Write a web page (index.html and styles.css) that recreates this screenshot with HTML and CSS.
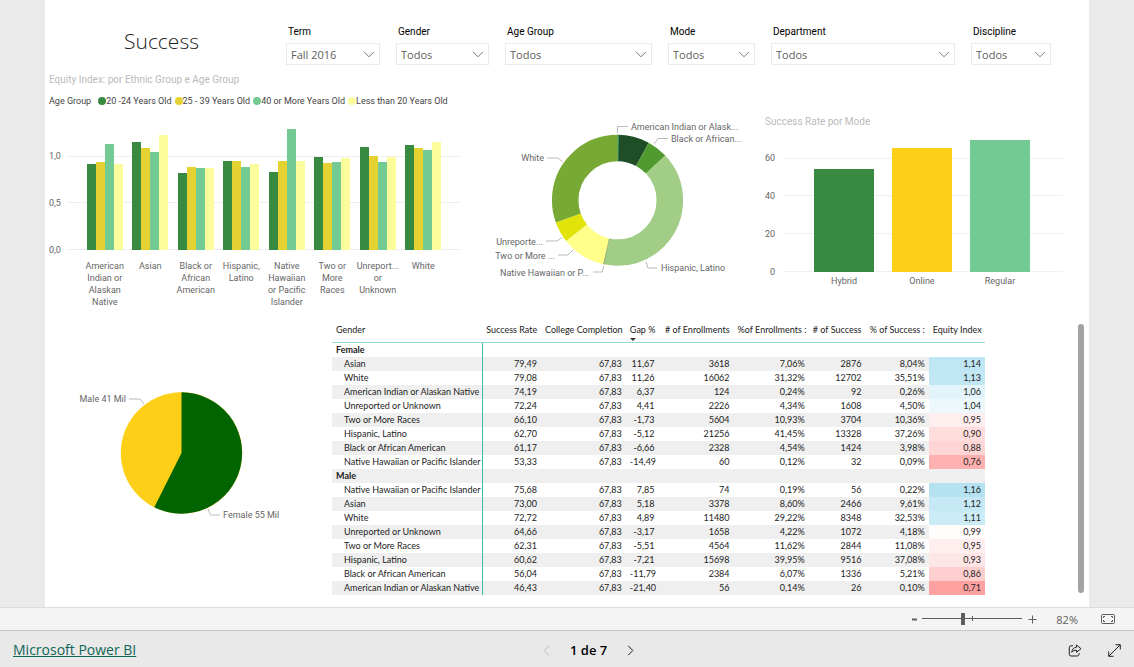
FILE: index.html
```html
<!DOCTYPE html>
<html lang="pt">
<head>
<meta charset="utf-8">
<meta name="viewport" content="width=device-width, initial-scale=1">
<title>Success - Microsoft Power BI</title>
<link rel="stylesheet" href="styles.css">
</head>
<body>
<main class="stage">
<div class="report">
  <header class="top">
    <h1 class="title">Success</h1>
    <div class="filter"><label for="term">Term</label><div class="pick"><select id="term"><option>Fall 2016</option></select><svg class="arrow" viewBox="0 0 12 7"><path d="M1 .8 6 5.8 11 .8"/></svg></div></div>
    <div class="filter"><label for="gender">Gender</label><div class="pick"><select id="gender"><option>Todos</option></select><svg class="arrow" viewBox="0 0 12 7"><path d="M1 .8 6 5.8 11 .8"/></svg></div></div>
    <div class="filter"><label for="age">Age Group</label><div class="pick"><select id="age"><option>Todos</option></select><svg class="arrow" viewBox="0 0 12 7"><path d="M1 .8 6 5.8 11 .8"/></svg></div></div>
    <div class="filter"><label for="mode">Mode</label><div class="pick"><select id="mode"><option>Todos</option></select><svg class="arrow" viewBox="0 0 12 7"><path d="M1 .8 6 5.8 11 .8"/></svg></div></div>
    <div class="filter"><label for="dept">Department</label><div class="pick"><select id="dept"><option>Todos</option></select><svg class="arrow" viewBox="0 0 12 7"><path d="M1 .8 6 5.8 11 .8"/></svg></div></div>
    <div class="filter"><label for="disc">Discipline</label><div class="pick"><select id="disc"><option>Todos</option></select><svg class="arrow" viewBox="0 0 12 7"><path d="M1 .8 6 5.8 11 .8"/></svg></div></div>
  </header>

  <div class="charts">
    <section class="equity">
      <h2 class="caption">Equity Index: por Ethnic Group e Age Group</h2>
      <div class="legend">
        <span class="legend-name">Age Group</span>
        <span class="key k1">20 -24 Years Old</span>
        <span class="key k2">25 - 39 Years Old</span>
        <span class="key k3">40 or More Years Old</span>
        <span class="key k4">Less than 20 Years Old</span>
      </div>
      <div class="chart">
        <div class="axis axis-equity"><span>1,0</span><span>0,5</span><span>0,0</span></div>
        <div class="plot plot-equity">
          <div class="group"><i class="k1" style="height:68%"></i><i class="k2" style="height:70%"></i><i class="k3" style="height:84%"></i><i class="k4" style="height:68%"></i></div>
          <div class="group"><i class="k1" style="height:86%"></i><i class="k2" style="height:81%"></i><i class="k3" style="height:78%"></i><i class="k4" style="height:91%"></i></div>
          <div class="group"><i class="k1" style="height:61%"></i><i class="k2" style="height:66%"></i><i class="k3" style="height:65%"></i><i class="k4" style="height:65%"></i></div>
          <div class="group"><i class="k1" style="height:71%"></i><i class="k2" style="height:71%"></i><i class="k3" style="height:66%"></i><i class="k4" style="height:68%"></i></div>
          <div class="group"><i class="k1" style="height:62%"></i><i class="k2" style="height:71%"></i><i class="k3" style="height:96%"></i><i class="k4" style="height:71%"></i></div>
          <div class="group"><i class="k1" style="height:74%"></i><i class="k2" style="height:69%"></i><i class="k3" style="height:70%"></i><i class="k4" style="height:73%"></i></div>
          <div class="group"><i class="k1" style="height:82%"></i><i class="k2" style="height:75%"></i><i class="k3" style="height:70%"></i><i class="k4" style="height:74%"></i></div>
          <div class="group"><i class="k1" style="height:83%"></i><i class="k2" style="height:81%"></i><i class="k3" style="height:79%"></i><i class="k4" style="height:86%"></i></div>
        </div>
        <div class="cats cats-equity">
          <span>American<br>Indian or<br>Alaskan<br>Native</span><span>Asian</span><span>Black or<br>African<br>American</span><span>Hispanic,<br>Latino</span><span>Native<br>Hawaiian<br>or Pacific<br>Islander</span><span>Two or<br>More<br>Races</span><span>Unreport...<br>or<br>Unknown</span><span>White</span>
        </div>
      </div>
    </section>

    <svg class="donut" viewBox="0 0 270 180" role="img" aria-label="Ethnic Group">
      <g class="ring" transform="rotate(-90 127.5 90.3)">
        <circle cx="127.5" cy="90.3" r="52.3" pathLength="1000" stroke="#1f4e26" stroke-dasharray="79 921"/>
        <circle cx="127.5" cy="90.3" r="52.3" pathLength="1000" stroke="#3a9a6a" stroke-dasharray="4 996"/>
        <circle cx="127.5" cy="90.3" r="52.3" pathLength="1000" stroke="#519a30" stroke-dasharray="51 949" stroke-dashoffset="-79"/>
        <circle cx="127.5" cy="90.3" r="52.3" pathLength="1000" stroke="#a2cd86" stroke-dasharray="404 596" stroke-dashoffset="-130"/>
        <circle cx="127.5" cy="90.3" r="52.3" pathLength="1000" stroke="#ffff8a" stroke-dasharray="109 891" stroke-dashoffset="-534"/>
        <circle cx="127.5" cy="90.3" r="52.3" pathLength="1000" stroke="#8a9a6a" stroke-dasharray="2 998" stroke-dashoffset="-533"/>
        <circle cx="127.5" cy="90.3" r="52.3" pathLength="1000" stroke="#e1e30b" stroke-dasharray="52 948" stroke-dashoffset="-643"/>
        <circle cx="127.5" cy="90.3" r="52.3" pathLength="1000" stroke="#78a935" stroke-dasharray="305 695" stroke-dashoffset="-695"/>
      </g>
      <path class="lead" d="M127.5 23V16.5H138M164 34l4-5.500h10M57 48h11l5 4M56 131h11l5-3.500M68 145h10l5-5M103 162h9l2-6M156 152l2 6h9"/>
      <g class="tag">
        <text x="141" y="20">American Indian or Alask...</text>
        <text x="181" y="32">Black or African...</text>
        <text x="54" y="51" text-anchor="end">White</text>
        <text x="53" y="135" text-anchor="end">Unreporte...</text>
        <text x="65" y="149" text-anchor="end">Two or More ...</text>
        <text x="99" y="166" text-anchor="end">Native Hawaiian or P...</text>
        <text x="171" y="161">Hispanic, Latino</text>
      </g>
    </svg>

    <section class="rate">
      <h2 class="caption">Success Rate por Mode</h2>
      <div class="chart">
        <div class="axis axis-rate"><span>60</span><span>40</span><span>20</span><span>0</span></div>
        <div class="plot plot-rate"><div class="group"><i class="k1" style="height:78%"></i></div><div class="group"><i class="k5" style="height:94%"></i></div><div class="group"><i class="k3" style="height:100%"></i></div></div>
        <div class="cats cats-rate"><span>Hybrid</span><span>Online</span><span>Regular</span></div>
      </div>
    </section>
  </div>

  <div class="lower">
    <svg class="pie" viewBox="0 0 287 150" role="img" aria-label="Gender">
      <circle cx="136.500" cy="73" r="60.700" fill="#fdcf17"/>
      <path d="M136.500 73V12.300A60.700 60.700 0 1 1 109.300 127.300Z" fill="#006400"/>
      <path class="lead" d="M84 19h11l4 5M163 129l2.500 6H175"/>
      <g class="tag"><text x="81" y="22" text-anchor="end">Male 41 Mil</text><text x="178" y="138">Female 55 Mil</text></g>
    </svg>

    <table class="matrix">
      <colgroup><col class="c-name"><col class="c-rate"><col class="c-coll"><col class="c-gap"><col class="c-enr"><col class="c-penr"><col class="c-suc"><col class="c-psuc"><col class="c-idx"></colgroup>
      <thead><tr><th scope="col">Gender</th><th scope="col">Success Rate</th><th scope="col">College Completion</th><th scope="col" class="sorted">Gap %</th><th scope="col"># of Enrollments</th><th scope="col">%of Enrollments :</th><th scope="col"># of Success</th><th scope="col">% of Success :</th><th scope="col">Equity Index</th></tr></thead>
      <tbody>
        <tr class="head"><th scope="row">Female</th><td></td><td></td><td></td><td></td><td></td><td></td><td></td><td></td></tr>
        <tr><th scope="row">Asian</th><td>79,49</td><td>67,83</td><td>11,67</td><td>3618</td><td>7,06%</td><td>2876</td><td>8,04%</td><td style="background:#bfe6f3">1,14</td></tr>
        <tr><th scope="row">White</th><td>79,08</td><td>67,83</td><td>11,26</td><td>16062</td><td>31,32%</td><td>12702</td><td>35,51%</td><td style="background:#c2e7f4">1,13</td></tr>
        <tr><th scope="row">American Indian or Alaskan Native</th><td>74,19</td><td>67,83</td><td>6,37</td><td>124</td><td>0,24%</td><td>92</td><td>0,26%</td><td style="background:#e3f4fb">1,06</td></tr>
        <tr><th scope="row">Unreported or Unknown</th><td>72,24</td><td>67,83</td><td>4,41</td><td>2226</td><td>4,34%</td><td>1608</td><td>4,50%</td><td style="background:#edf8fc">1,04</td></tr>
        <tr><th scope="row">Two or More Races</th><td>66,10</td><td>67,83</td><td>-1,73</td><td>5604</td><td>10,93%</td><td>3704</td><td>10,36%</td><td style="background:#ffeeee">0,95</td></tr>
        <tr><th scope="row">Hispanic, Latino</th><td>62,70</td><td>67,83</td><td>-5,12</td><td>21256</td><td>41,45%</td><td>13328</td><td>37,26%</td><td style="background:#ffdddd">0,90</td></tr>
        <tr><th scope="row">Black or African American</th><td>61,17</td><td>67,83</td><td>-6,66</td><td>2328</td><td>4,54%</td><td>1424</td><td>3,98%</td><td style="background:#ffd5d5">0,88</td></tr>
        <tr><th scope="row">Native Hawaiian or Pacific Islander</th><td>53,33</td><td>67,83</td><td>-14,49</td><td>60</td><td>0,12%</td><td>32</td><td>0,09%</td><td style="background:#ffb0b0">0,76</td></tr>
        <tr class="head"><th scope="row">Male</th><td></td><td></td><td></td><td></td><td></td><td></td><td></td><td></td></tr>
        <tr><th scope="row">Native Hawaiian or Pacific Islander</th><td>75,68</td><td>67,83</td><td>7,85</td><td>74</td><td>0,19%</td><td>56</td><td>0,22%</td><td style="background:#b5e2f1">1,16</td></tr>
        <tr><th scope="row">Asian</th><td>73,00</td><td>67,83</td><td>5,18</td><td>3378</td><td>8,60%</td><td>2466</td><td>9,61%</td><td style="background:#c6e9f5">1,12</td></tr>
        <tr><th scope="row">White</th><td>72,72</td><td>67,83</td><td>4,89</td><td>11480</td><td>29,22%</td><td>8348</td><td>32,53%</td><td style="background:#cbebf6">1,11</td></tr>
        <tr><th scope="row">Unreported or Unknown</th><td>64,66</td><td>67,83</td><td>-3,17</td><td>1658</td><td>4,22%</td><td>1072</td><td>4,18%</td><td style="background:#fffcfc">0,99</td></tr>
        <tr><th scope="row">Two or More Races</th><td>62,31</td><td>67,83</td><td>-5,51</td><td>4564</td><td>11,62%</td><td>2844</td><td>11,08%</td><td style="background:#ffeeee">0,95</td></tr>
        <tr><th scope="row">Hispanic, Latino</th><td>60,62</td><td>67,83</td><td>-7,21</td><td>15698</td><td>39,95%</td><td>9516</td><td>37,08%</td><td style="background:#ffe6e6">0,93</td></tr>
        <tr><th scope="row">Black or African American</th><td>56,04</td><td>67,83</td><td>-11,79</td><td>2384</td><td>6,07%</td><td>1336</td><td>5,21%</td><td style="background:#ffcece">0,86</td></tr>
        <tr><th scope="row">American Indian or Alaskan Native</th><td>46,43</td><td>67,83</td><td>-21,40</td><td>56</td><td>0,14%</td><td>26</td><td>0,10%</td><td style="background:#ffa1a1">0,71</td></tr>
      </tbody>
    </table>
    <div class="scroll"></div>
  </div>
</div>
</main>

<div class="zoombar">
  <button type="button" class="step" aria-label="Zoom out"><svg viewBox="0 0 9 9" width="9" height="9"><path d="M2 4.500h5" stroke-width="2"/></svg></button>
  <input class="zoom" type="range" min="10" max="190" value="82" aria-label="Zoom">
  <button type="button" class="step" aria-label="Zoom in"><svg viewBox="0 0 9 9" width="9" height="9"><path d="M.5 4.500h8M4.500 .5v8"/></svg></button>
  <output class="percent">82%</output>
  <button type="button" class="fit" aria-label="Fit to page"><svg viewBox="0 0 14 10" width="14" height="10"><rect x=".5" y=".5" width="13" height="9" rx="1"/><path d="M2.500 4V2.500H4M10 2.500h1.500V4M11.500 6v1.500H10M4 7.500H2.500V6"/></svg></button>
</div>

<footer class="foot">
  <a class="brand" href="#">Microsoft Power BI</a>
  <nav class="pager" aria-label="Pages">
    <button type="button" class="prev" aria-label="Previous page" disabled><svg viewBox="0 0 7 11" width="7" height="11"><path d="M5.800 .8 1.200 5.500 5.800 10.200"/></svg></button>
    <span>1 de 7</span>
    <button type="button" aria-label="Next page"><svg viewBox="0 0 7 11" width="7" height="11"><path d="M1.200 .8 5.800 5.500 1.200 10.200"/></svg></button>
  </nav>
  <div class="actions">
    <button type="button" aria-label="Share"><svg viewBox="0 0 14 13" width="14" height="13"><path d="M5 1.800H3A1.700 1.700 0 0 0 1.300 3.500V10.300A1.700 1.700 0 0 0 3 12H9.300A1.700 1.700 0 0 0 11 10.300V9"/><path d="M8.500 1 13 4.700 8.500 8.300V6.200C6.500 6.100 5 6.800 3.800 8.300 4 5.300 5.700 3.400 8.500 3.200Z"/></svg></button>
    <button type="button" aria-label="Full screen"><svg viewBox="0 0 13 13" width="13" height="13"><path d="M1 12 12 1M7.500 .7h4.800v4.800M.7 7.500v4.800h4.800"/></svg></button>
  </div>
</footer>
</body>
</html>
```
FILE: styles.css
```css
* { box-sizing: border-box; }
body {
  margin: 0;
  min-height: 100vh;
  display: flex;
  flex-direction: column;
  font-family: Roboto, "Noto Sans", sans-serif;
  font-size: 9px;
  line-height: 12px;
  color: #222;
  background: #eaeaea;
}
h1, h2 { margin: 0; font-weight: 400; }
button { border: 0; padding: 0; background: none; display: grid; place-items: center; }
svg { display: block; fill: none; }

.stage { flex: 1; display: flex; padding: 0 45px; }
.report { flex: 1; min-width: 0; background: #fff; }

/* Title and slicers */
.top {
  display: grid;
  grid-template-columns: 225fr 94fr 93fr 147fr 87fr 184fr 80fr 22fr;
  column-gap: 16px;
  padding-top: 25px;
}
.title { font-family: "Open Sans", "Noto Sans", sans-serif; font-size: 21px; line-height: 32px; font-weight: 300; text-align: center; padding-left: 8px; color: #222; }
.filter label { display: block; padding-left: 2px; line-height: 14px; margin-bottom: 4px; font-size: 10px; color: #000; }
.pick { display: grid; align-items: center; }
.pick > * { grid-area: 1 / 1; }
.pick select {
  appearance: none;
  width: 100%;
  height: 22px;
  padding: 0 4px;
  border: 1px solid #eaeaea;
  border-radius: 0;
  background: #fff;
  font: 11px "Open Sans", "Noto Sans", sans-serif;
  color: #605e5c;
}
.arrow { width: 12px; height: 7px; margin-right: 5px; justify-self: end; stroke: #777; pointer-events: none; }

/* Charts */
.charts { display: grid; grid-template-columns: 445fr 270fr 329fr; align-items: start; padding-top: 8px; }
.charts > * { min-width: 0; }
.caption { font-size: 10px; line-height: 14px; color: #bbb; }
.equity { padding: 0 30px 0 4px; }
.legend { display: flex; gap: 3px; margin: 8px 0 17px; line-height: 12px; white-space: nowrap; color: #444; }
.legend-name { margin-right: 4px; }
.key { display: flex; align-items: center; }
.key::before { content: ""; width: 8px; height: 8px; border-radius: 50%; background: var(--fill); }
.k1 { --fill: #388a41; }
.k2 { --fill: #e4d232; }
.k3 { --fill: #73ca92; }
.k4 { --fill: #fbfc9b; }
.k5 { --fill: #fdcf17; }

.chart { display: grid; grid-template-columns: 19px 1fr; }
.axis { display: flex; flex-direction: column; justify-content: space-between; color: #666; }
.axis span { line-height: 12px; }
.axis-equity { margin: 26px 0 -6px; }
.plot { display: flex; align-items: stretch; }
.group { flex: 1; display: flex; align-items: flex-end; justify-content: center; }
.group i { background: var(--fill); }
.plot-equity {
  height: 126px;
  padding: 0 14px;
  background:
    linear-gradient(#eee, #eee) 0 32px / 100% 1px no-repeat,
    linear-gradient(#eee, #eee) 0 78px / 100% 1px no-repeat,
    linear-gradient(#eee, #eee) 0 125px / 100% 1px no-repeat;
}
.plot-equity .group i { width: 20%; }
.cats { grid-column: 2; display: flex; text-align: center; color: #666; }
.cats span { flex: 1 1 0; min-width: 0; white-space: nowrap; }
.cats-equity { padding: 10px 14px 0; }

.donut { width: 100%; margin-top: 37px; overflow: visible; }
.ring circle { stroke-width: 26.5px; }
.lead { stroke: #bbb; }
.tag { font-size: 9px; fill: #666; }

.rate { padding: 42px 26px 0 5px; }
.rate .chart { margin-top: 11px; }
.axis-rate { margin: 12px 9px -6px 0; text-align: right; }
.plot-rate {
  height: 132px;
  padding: 0 24px 0 21px;
  background:
    linear-gradient(#f0f0f0, #f0f0f0) 0 18px / 100% 1px no-repeat,
    linear-gradient(#f0f0f0, #f0f0f0) 0 55px / 100% 1px no-repeat,
    linear-gradient(#f0f0f0, #f0f0f0) 0 93px / 100% 1px no-repeat,
    linear-gradient(#f0f0f0, #f0f0f0) 0 131px / 100% 1px no-repeat;
}
.plot-rate .group i { width: 76%; }
.cats-rate { padding: 3px 24px 0 21px; }

/* Pie and matrix */
.lower { display: grid; grid-template-columns: 287fr 653fr 93fr 11px; margin-top: 14px; }
.pie { width: 100%; margin-top: 58px; }
.matrix { grid-column: 2; width: 100%; border-collapse: collapse; table-layout: fixed; align-self: start; white-space: nowrap; font-family: Lato, "Noto Sans", sans-serif; }
.c-name { width: 23%; }
.c-rate { width: 9%; }
.c-coll { width: 13%; }
.c-gap { width: 5%; }
.c-enr { width: 11.5%; }
.c-penr { width: 11.5%; }
.c-suc { width: 8.7%; }
.c-psuc { width: 9.7%; }
.c-idx { width: 8.6%; }
.matrix th, .matrix td { padding: 0 4px; text-align: right; font-weight: 400; line-height: 14px; height: 14px; }
.matrix tr > :first-child { text-align: left; }
.matrix thead th { height: 20px; padding-bottom: 4px; border-bottom: 1px solid #93ddd3; }
.matrix tbody th { padding-left: 12px; border-right: 1px solid #39bcab; }
.matrix .head th { padding-left: 4px; font-weight: 700; }
.matrix tbody tr:nth-child(even) { background: #efefef; }
.sorted { position: relative; }
.sorted::after {
  content: "";
  position: absolute;
  left: 4px;
  bottom: 1px;
  border: 3px solid transparent;
  border-top-color: #333;
  border-bottom: 0;
}
.scroll { grid-column: 4; width: 6px; height: 269px; margin-top: 2px; border-radius: 3px; background: #a3a3a3; }

/* Zoom bar */
.zoombar {
  display: flex;
  align-items: center;
  justify-content: flex-end;
  height: 23px;
  padding-right: 19px;
  border-top: 1px solid #dcdcdc;
  background: #f4f4f4;
  color: #605e5c;
}
.zoombar svg { stroke: #605e5c; }
.zoom {
  appearance: none;
  width: 100px;
  height: 14px;
  margin: 0 6px 0 3px;
  background:
    linear-gradient(#605e5c, #605e5c) 0 6px / 100% 1px no-repeat,
    linear-gradient(#605e5c, #605e5c) 50px 4px / 1px 5px no-repeat;
}
.zoom::-webkit-slider-thumb { appearance: none; width: 4px; height: 12px; background: #605e5c; }
.percent { margin: 0 23px 0 19px; font: 11px "Open Sans", "Noto Sans", sans-serif; }

/* Footer */
.foot {
  display: grid;
  grid-template-columns: 527fr auto 484fr;
  align-items: center;
  height: 37px;
  padding: 2px 13px 0;
  border-top: 1px solid #c6c6c6;
  background: #e9e9e9;
  font-family: "Open Sans", "Noto Sans", sans-serif;
}
.brand { justify-self: start; font-size: 14px; line-height: 18px; color: #0f6657; }
.pager { display: flex; align-items: center; gap: 20px; font-size: 13px; line-height: 16px; font-weight: 600; color: #000; }
.pager svg, .actions svg { stroke: #222; }
.prev svg { stroke: #bbb; }
.actions { display: flex; justify-content: flex-end; gap: 26px; }
```
